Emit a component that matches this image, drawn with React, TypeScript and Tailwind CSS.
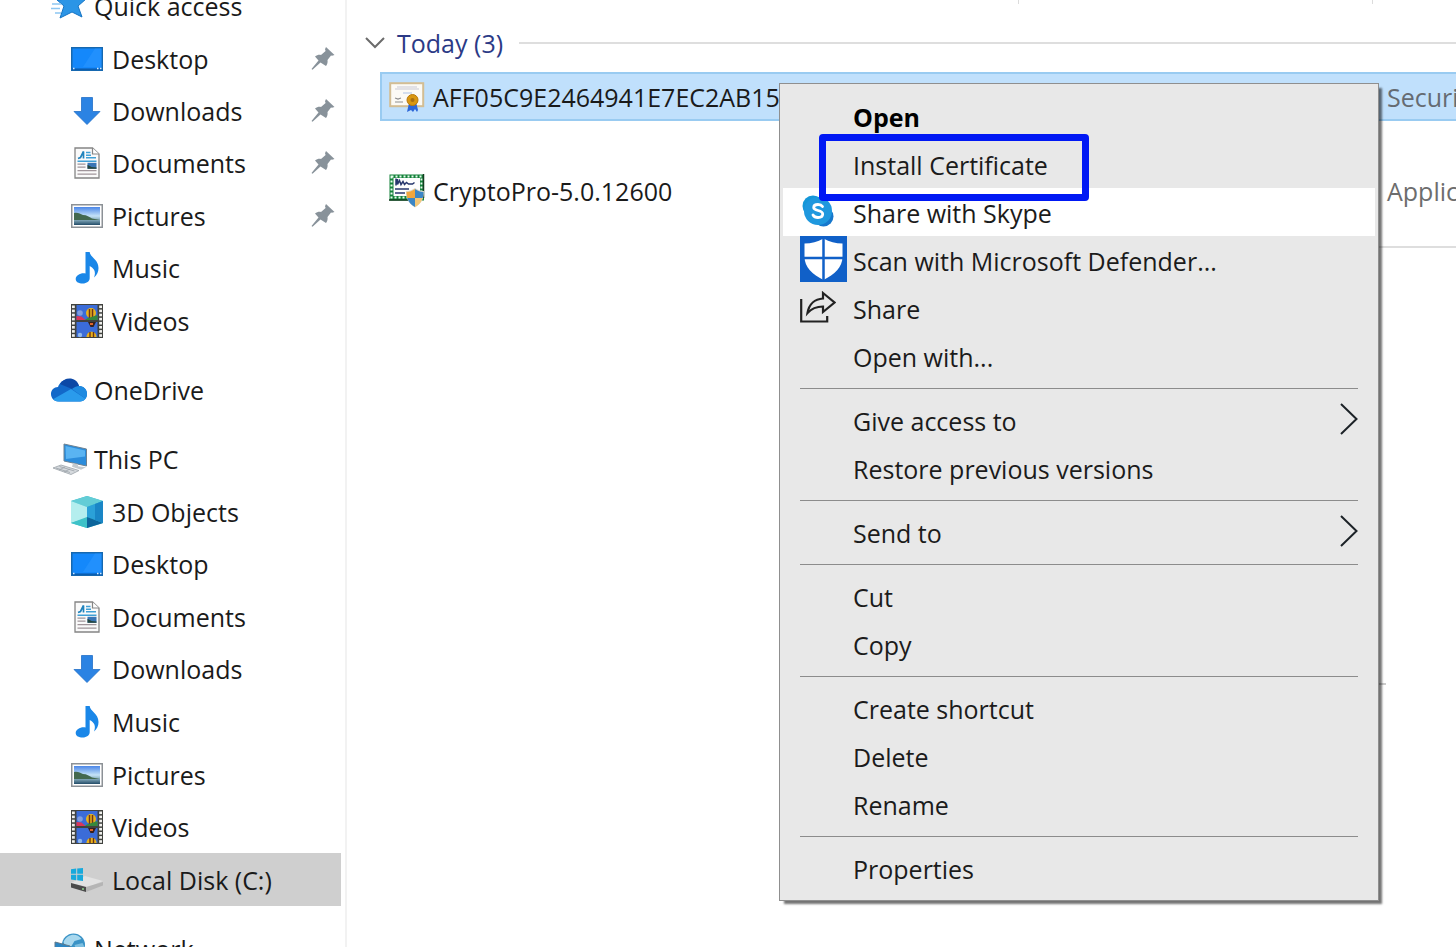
import type { ReactNode } from 'react';

function StarIcon() {
  return (
    <svg className="h-8 w-9" viewBox="0 0 36 32" aria-hidden="true">
      <path d="M20 0l4 9h11l-8 7 4 11-10-5-12 6 4-12-7-6 11-1z" fill="#2b95e6" stroke="#1674c4" strokeWidth="1" />
      <path d="M1 14h9M0 18.500h9M4 23h6" stroke="#8cc6f2" strokeWidth="1.500" />
    </svg>
  );
}

function DesktopIcon() {
  return (
    <svg className="h-6 w-8" viewBox="0 0 32 24" aria-hidden="true">
      <rect x=".75" y=".75" width="30.5" height="22.5" fill="#1488fb" stroke="#1668b0" strokeWidth="1.5" />
      <path d="M12 20L24 1.5h6.5V20z" fill="#2a96ff" opacity=".6" />
      <path d="M1 22.2h30" stroke="#0b5cad" strokeWidth="1.5" />
      <path d="M2 21.5h1.5M26 21.500h1.500M29 21.500h1.500" stroke="#d5ebff" strokeWidth="1.500" />
    </svg>
  );
}

function DownloadsIcon() {
  return (
    <svg className="h-7 w-7" viewBox="0 0 28 28" aria-hidden="true">
      <path d="M8.500.5h11v14h7.500L14 27.500 1 14.500h7.500z" fill="#2b83e3" stroke="#2270c8" strokeWidth=".8" />
    </svg>
  );
}

function DocumentsIcon() {
  return (
    <svg className="h-8 w-[26px]" viewBox="0 0 26 32" aria-hidden="true">
      <path d="M1 1h17.500l6.500 6v24H1z" fill="#fafafa" stroke="#858585" strokeWidth="1.300" />
      <path d="M18.500 1v6H25" fill="#fff" stroke="#858585" strokeWidth="1.200" />
      <path d="M4 11.500l2.500-1 3-6v7" fill="none" stroke="#2083bd" strokeWidth="1.700" />
      <path d="M12 5.500h4.500M12 8.200h5M12 10.800h10M3.500 14.200h19" stroke="#3fa0d6" strokeWidth="1.400" />
      <path d="M3.500 17.200h8M3.500 20.200h8M3.500 23.700h19M3.500 27.200h19" stroke="#a0959a" strokeWidth="1.200" />
      <rect x="13.500" y="15.800" width="9" height="6" fill="#3975b5" />
      <path d="M13.500 21.800v-4l4 2.200 5 .5v1.300z" fill="#26463d" />
    </svg>
  );
}

function PicturesIcon() {
  return (
    <svg className="h-6 w-8" viewBox="0 0 32 24" aria-hidden="true">
      <defs>
        <linearGradient id="sky" x1="0" y1="0" x2="0" y2="1">
          <stop offset="0" stopColor="#4a86e8" />
          <stop offset=".5" stopColor="#c5e3f8" />
          <stop offset=".68" stopColor="#8fb4c4" />
          <stop offset="1" stopColor="#234c68" />
        </linearGradient>
      </defs>
      <rect x=".75" y=".75" width="30.500" height="22.500" fill="#fff" stroke="#8c9196" strokeWidth="1.500" />
      <rect x="3" y="3" width="26" height="18" fill="url(#sky)" />
      <path d="M3 9c4-1 6 1 9 2 4 0 6 2 9 3.500l8 1.500H3z" fill="#43694f" />
    </svg>
  );
}

function MusicIcon() {
  return (
    <svg className="h-8 w-6" viewBox="0 0 24 32" aria-hidden="true">
      <path
        d="M10.500 0h4.200c.2 5 8.800 7.500 8.800 16 0 4-1.500 7-4.500 9.500 2-5 .8-9-4.300-11.500v12c0 3.200-3 5.500-7 5.500-4 0-7-1.500-7-4.500 0-3.200 4-5.700 7.800-5.700.8 0 1.500.1 2 .3z"
        fill="#1a87e8"
      />
    </svg>
  );
}

const holes = [0, 1, 2, 3, 4, 5, 6, 7];

function VideosIcon() {
  return (
    <svg className="h-[34px] w-8" viewBox="0 0 32 34" aria-hidden="true">
      <rect width="32" height="34" fill="#40423f" />
      {holes.map((n) => (
        <g key={n} fill="#f1f1ee">
          <rect x="1" y={1.5 + n * 4.1} width="2.800" height="2.600" />
          <rect x="28.200" y={1.5 + n * 4.1} width="2.800" height="2.600" />
        </g>
      ))}
      <rect x="5.500" y="1" width="21" height="15" fill="#3b6cd8" />
      <rect x="5.500" y="18" width="21" height="15" fill="#3b6cd8" />
      <ellipse cx="20" cy="9" rx="5" ry="5" fill="#e8b21c" />
      <path d="M18.500 5v9M21.500 5v9" stroke="#6d3418" strokeWidth="1.500" />
      <circle cx="9" cy="9" r="2.800" fill="#7f9de0" />
      <path d="M5.500 12l5 .5 4 3.500h-9z" fill="#dc3558" />
      <path d="M16 14.500l10.500-3.500v5H14z" fill="#36883c" />
      <path d="M17 18h8l-2.500 5h-3z" fill="#37201c" />
      <path d="M19 19h3v2h-3z" fill="#e0662b" />
      <path d="M15.500 33c0-7 10-7 10 0z" fill="#e8b21c" />
      <path d="M19 28v5M22.500 28v5" stroke="#6d3418" strokeWidth="1.400" />
      <circle cx="9" cy="31" r="2.200" fill="#91b9ec" />
    </svg>
  );
}

function OneDriveIcon() {
  return (
    <svg className="h-6 w-9" viewBox="0 0 36 24" aria-hidden="true">
      <path d="M7 9C10 0 24-3 28 8c5 0 8 4 8 8s-3 7.500-7 7.500H8C3 23.500 0 20 0 16c0-4 3-7 7-7z" fill="#1268c9" />
      <path d="M9 6C13-1 25-2 28 8l-7 3z" fill="#0c48a6" />
      <path d="M21 11c3-3 7-3.500 9-2.800 4 1 6 4 6 7.800 0 2-.6 3.500-1.500 4.700z" fill="#1f8ae0" />
      <path d="M2 21.200L20 11l14.500 9.700c-1.300 1.800-3.300 2.800-5.500 2.800H8c-2.500 0-4.500-.9-6-2.300z" fill="#2a9bec" />
    </svg>
  );
}

function ThisPcIcon() {
  return (
    <svg className="h-8 w-9" viewBox="0 0 36 32" aria-hidden="true">
      <path d="M13 1l22.500 5v17L13 18z" fill="#2b8cdb" stroke="#6d8190" strokeWidth="1" />
      <path d="M14.500 3l19.500 4.400v6L15 16z" fill="#5ab4f2" />
      <path d="M22 20l5 1.200v2l8 1-5 2.500-9-3z" fill="#c3cacf" />
      <path d="M2 25l8-3 18 5.500-8 4z" fill="#d6dade" stroke="#9aa2a8" strokeWidth=".8" />
      <path d="M5 25l14 4.500M8.500 23.500l15 4.500M8 27l6-3M13 29l6-3" stroke="#9aa2a8" strokeWidth=".8" />
    </svg>
  );
}

function CubeIcon() {
  return (
    <svg className="h-8 w-8" viewBox="0 0 32 32" aria-hidden="true">
      <path d="M16 0l16 5v22l-16 5-16-5V5z" fill="#37bccb" />
      <path d="M0 5l16-5 16 5-16 6z" fill="#63cdd6" />
      <path d="M0 5l16 6v11L0 27z" fill="#b4eeee" />
      <path d="M16 11l16-6v22l-16-6z" fill="#2ba1d8" />
      <path d="M0 27l16-6v11z" fill="#3ec2c8" />
      <path d="M16 21l16 6-16 5z" fill="#0d659c" />
      <path d="M24 8l8-3v22l-8-3z" fill="#1a86c6" />
    </svg>
  );
}

function DiskIcon() {
  return (
    <svg className="h-6 w-8" viewBox="0 0 32 24" aria-hidden="true">
      <path d="M0 15l14-7 18 5-15 6z" fill="#e2e2e2" />
      <path d="M0 15l15 4v5L0 19.500z" fill="#4b4b4b" />
      <path d="M15 19l17-5v3.500L15 24z" fill="#b5b5b5" />
      <circle cx="12" cy="21" r="1" fill="#8ed48d" />
      <path d="M0 1.300l5.200-.7v5.200H0zM6.200.5L12 0v5.800H6.200zM0 6.800h5.200v5.400L0 11.600zM6.200 6.800H12V13l-5.800-.7z" fill="#17a9dc" />
    </svg>
  );
}

function NetworkIcon() {
  return (
    <svg className="h-8 w-9" viewBox="0 0 36 32" aria-hidden="true">
      <circle cx="22.500" cy="12" r="11.500" fill="#3a93c6" />
      <path d="M12.500 9c4-9 14-9 18-3l-7 2-3 5-6 1z" fill="#a9d8ee" />
      <path d="M23.500 12l8-2 2 4-7 6z" fill="#7dbfe0" />
      <path d="M4 9l15 4v13L4 22z" fill="#2c86c4" stroke="#60798a" />
    </svg>
  );
}

function PinIcon() {
  return (
    <svg className="h-6 w-6" viewBox="0 0 24 24" aria-hidden="true">
      <path d="M15 0l8.500 8-2.500.8-1-.4-3.500 4.600c.4 2.500-.2 4.300-1.500 6L9.500 15.500 1.500 22.800.500 22l7-8.500L4 9.500c2-1.500 4-2 6-1.500L14.600 4l-.6-1.800z" fill="#88929a" />
    </svg>
  );
}

type NavItem = { label: string; icon: ReactNode; pinned?: boolean; selected?: boolean; root?: boolean };

const quickAccess: NavItem[] = [
  { label: 'Quick access', icon: <StarIcon />, root: true },
  { label: 'Desktop', icon: <DesktopIcon />, pinned: true },
  { label: 'Downloads', icon: <DownloadsIcon />, pinned: true },
  { label: 'Documents', icon: <DocumentsIcon />, pinned: true },
  { label: 'Pictures', icon: <PicturesIcon />, pinned: true },
  { label: 'Music', icon: <MusicIcon /> },
  { label: 'Videos', icon: <VideosIcon /> },
];

const thisPc: NavItem[] = [
  { label: 'This PC', icon: <ThisPcIcon />, root: true },
  { label: '3D Objects', icon: <CubeIcon /> },
  { label: 'Desktop', icon: <DesktopIcon /> },
  { label: 'Documents', icon: <DocumentsIcon /> },
  { label: 'Downloads', icon: <DownloadsIcon /> },
  { label: 'Music', icon: <MusicIcon /> },
  { label: 'Pictures', icon: <PicturesIcon /> },
  { label: 'Videos', icon: <VideosIcon /> },
  { label: 'Local Disk (C:)', icon: <DiskIcon />, selected: true },
];

function NavRow({ item }: { item: NavItem }) {
  return (
    <li className={item.selected ? 'bg-[#cfcfcf]' : ''}>
      <a href="#" className={`flex h-full items-center pr-1.5 ${item.root ? 'pl-[51px]' : 'pl-[69px]'}`}>
        <span className="flex w-9 shrink-0 justify-center">{item.icon}</span>
        <span className="flex-1 pl-[7px] whitespace-nowrap">{item.label}</span>
        {item.pinned && <PinIcon />}
      </a>
    </li>
  );
}

function Sidebar() {
  return (
    <nav className="flex w-[347px] shrink-0 flex-col border-r-2 border-[#f2f2f2] pr-1">
      <div className="-mt-5 flex flex-col gap-[17px]">
        <ul className="grid h-[367px] grid-rows-7">
          {quickAccess.map((item) => <NavRow key={item.label} item={item} />)}
        </ul>
        <ul className="grid h-[52px]">
          <NavRow item={{ label: 'OneDrive', icon: <OneDriveIcon />, root: true }} />
        </ul>
        <ul className="grid h-[473px] grid-rows-9">
          {thisPc.map((item) => <NavRow key={item.label} item={item} />)}
        </ul>
        <ul className="grid h-[52px]">
          <NavRow item={{ label: 'Network', icon: <NetworkIcon />, root: true }} />
        </ul>
      </div>
    </nav>
  );
}

function CertificateIcon() {
  return (
    <svg className="h-8 w-9 shrink-0" viewBox="0 0 36 32" aria-hidden="true">
      <rect x="1.200" y="2.200" width="33" height="23" fill="#fcfaf5" stroke="#d3bd93" strokeWidth="2" />
      <path d="M8 6h20M6 8h24" stroke="#c9c9d4" strokeWidth="1" />
      <path d="M14 12h9" stroke="#b9cbea" strokeWidth="1.200" />
      <path d="M6 17l3 1 3-1M6 21h8" fill="none" stroke="#8e8e8e" strokeWidth="1.200" />
      <path d="M20 22l-2 9 4-2 2 2 2-3 2 3 1-2-2-8z" fill="#2c66d8" />
      <circle cx="23.500" cy="19" r="5.500" fill="#d99711" stroke="#b9790a" />
      <circle cx="23.500" cy="19" r="2" fill="#a96f10" />
    </svg>
  );
}

function InstallerIcon() {
  return (
    <svg className="h-[34px] w-9 shrink-0" viewBox="0 0 36 34" aria-hidden="true">
      <path d="M.5.5H35v26H.5z" fill="#14813a" />
      <rect x="2.500" y="2.500" width="30" height="21" fill="none" stroke="#e9fff0" strokeWidth="2" strokeDasharray="2 2" />
      <rect x="4.500" y="4" width="26.500" height="18" fill="#fdfdfd" />
      <path d="M0 26h20M34.500 0v24" stroke="#153c20" strokeWidth="1.500" />
      <path d="M7 4.500v7M8.500 5v5.500l2-4 1.500 4 2-3 1.500 3 2-2 2 1.500h4l2-1.500" fill="none" stroke="#26366c" strokeWidth="1.500" />
      <path d="M6 15h14M6 19h10" stroke="#26366c" strokeWidth="1.500" />
      <path d="M26 14c3 2 5 3 9 3 0 8-3 13-9 16.500-6-3.500-9-8.500-9-16.500 4 0 6-1 9-3z" fill="#ddd9c8" />
      <path d="M26 15c-3 2-5 3-8.500 3 0 2 .2 4 .7 6H26z" fill="#f0a63e" />
      <path d="M26 15c3 2 5 3 8.500 3 0 2-.2 4-.8 6H26z" fill="#3c86c5" />
      <path d="M18.200 24H26v9c-4-2-6.500-5-7.800-9z" fill="#3c86c5" />
      <path d="M26 24h7.700c-1.200 4-3.700 7-7.700 9z" fill="#f3c778" />
    </svg>
  );
}

function FileList() {
  return (
    <main className="min-w-0 flex-1 overflow-hidden">
      <div className="flex h-7 items-start pl-[671px]">
        <span className="h-1 w-px bg-[#dcdcdc]" />
        <span className="ml-[353px] h-1 w-px bg-[#dcdcdc]" />
      </div>
      <button type="button" className="flex h-[30px] w-full items-center pl-[18px] text-[#2b3a86]">
        <svg className="h-3 w-5" viewBox="0 0 20 12" aria-hidden="true">
          <path d="M1 1l9 9 9-9" fill="none" stroke="#6b6b6b" strokeWidth="2" />
        </svg>
        <span className="pl-3 whitespace-nowrap">Today (3)</span>
        <span className="ml-4 h-0.5 flex-1 bg-[#dedede]" />
      </button>
      <table className="mt-[14px] ml-[33px] w-full table-fixed border-separate border-spacing-0 text-left">
        <tbody>
          <tr>
            <td className="h-[49px] w-[1007px] border-y-2 border-l-2 border-[#99cbf1] bg-[#c0e0fc] p-0 pl-[7px]">
              <div className="flex items-center gap-2">
                <CertificateIcon />
                <span className="whitespace-nowrap">AFF05C9E2464941E7EC2AB15</span>
              </div>
            </td>
            <td className="border-y-2 border-[#99cbf1] bg-[#c0e0fc] p-0 whitespace-nowrap text-[#656b72]">Security Certificate</td>
          </tr>
          <tr>
            <td className="p-0 pt-[46px] pl-[9px]">
              <div className="flex h-12 items-center gap-2">
                <InstallerIcon />
                <span className="whitespace-nowrap">CryptoPro-5.0.12600</span>
              </div>
            </td>
            <td className="p-0 pt-[46px] whitespace-nowrap text-[#6d6d6d]">Application</td>
          </tr>
        </tbody>
      </table>
      <div className="mt-[31px] ml-[700px] h-0.5 bg-[#dedede]" />
      <div className="mt-[435px] ml-[700px] h-0.5 w-[339px] bg-[#cccccc]" />
    </main>
  );
}

function SkypeIcon() {
  return (
    <svg className="h-8 w-8" viewBox="0 0 32 32" aria-hidden="true">
      <circle cx="11" cy="11" r="10.500" fill="#1597d8" />
      <circle cx="21.500" cy="21.500" r="10" fill="#1677cc" />
      <circle cx="16" cy="16" r="14" fill="#1f98de" />
      <path
        d="M20.500 11.500c-1-1.500-2.500-2-4.500-2-2.500 0-4.300 1.100-4.300 3 0 4 9 2 9 6.500 0 2.200-2 3.500-4.700 3.500-2.300 0-4-.8-5-2.500"
        fill="none"
        stroke="#fff"
        strokeWidth="2.800"
        strokeLinecap="round"
      />
    </svg>
  );
}

function DefenderIcon() {
  return (
    <svg className="h-[46px] w-[47px]" viewBox="0 0 47 46" aria-hidden="true">
      <rect width="47" height="46" fill="#1060c8" />
      <path d="M23.500 2.500c6 3.500 12 5 19 5v13c0 11-8 18-19 23.500-11-5.500-19-12.500-19-23.500v-13c7 0 13-1.500 19-5z" fill="#fff" />
      <path d="M23.500 1v44M3 22h41" stroke="#1060c8" strokeWidth="2.500" />
    </svg>
  );
}

function ShareIcon() {
  return (
    <svg className="h-8 w-9" viewBox="0 0 36 32" fill="none" stroke="#222" strokeWidth="2.200" aria-hidden="true">
      <path d="M1.200 8v22.500h26V25" />
      <path d="M23 2l11.500 9.500L23 21v-5.500c-6 0-11 1.500-15.500 6.500C9 13 15 8 23 7.500z" />
    </svg>
  );
}

type MenuEntry = { label: string; icon?: ReactNode; submenu?: boolean; bold?: boolean; hovered?: boolean; marked?: boolean };

const menuGroups: MenuEntry[][] = [
  [
    { label: 'Open', bold: true },
    { label: 'Install Certificate', marked: true },
    { label: 'Share with Skype', icon: <SkypeIcon />, hovered: true },
    { label: 'Scan with Microsoft Defender...', icon: <DefenderIcon /> },
    { label: 'Share', icon: <ShareIcon /> },
    { label: 'Open with...' },
  ],
  [{ label: 'Give access to', submenu: true }, { label: 'Restore previous versions' }],
  [{ label: 'Send to', submenu: true }],
  [{ label: 'Cut' }, { label: 'Copy' }],
  [{ label: 'Create shortcut' }, { label: 'Delete' }, { label: 'Rename' }],
  [{ label: 'Properties' }],
];

function ContextMenu() {
  return (
    <div
      role="menu"
      className="absolute top-[83px] left-[779px] w-[600px] border border-[#8f8f8f] bg-[#e8e8e8] px-[3px] py-2 text-[#1b1b1b] shadow-[4px_4px_2px_-1px_rgba(0,0,0,0.55)]"
    >
      {menuGroups.map((group, index) => (
        <div key={group[0].label} role="group">
          {index > 0 && (
            <div className="flex h-4 items-center pr-[17px] pl-[17px]">
              <hr className="flex-1 border-[#8c8c8c]" />
            </div>
          )}
          {group.map((entry) => (
            <button
              key={entry.label}
              type="button"
              role="menuitem"
              className={`relative flex h-12 w-full items-center pr-4 pl-[17px] text-left ${entry.hovered ? 'bg-white' : ''} ${entry.bold ? 'font-bold text-black' : ''}`}
            >
              <span className={`flex w-[47px] shrink-0 pb-0.5 ${entry.hovered ? 'pl-0.5' : ''}`}>{entry.icon}</span>
              <span className="flex-1 pt-0.5 pl-[6px] whitespace-nowrap">{entry.label}</span>
              {entry.submenu && (
                <span className="pb-0.5">
                  <svg className="block h-8 w-5" viewBox="0 0 20 32" aria-hidden="true">
                    <path d="M2 1l15.500 15L2 31" fill="none" stroke="#1c2227" strokeWidth="2" />
                  </svg>
                </span>
              )}
              {entry.marked && (
                <span className="absolute -top-1.5 left-9 z-10 h-[67px] w-[270px] rounded-[4px] border-[7px] border-[#0018f4]" />
              )}
            </button>
          ))}
        </div>
      ))}
    </div>
  );
}

export default function App() {
  return (
    <div className="relative flex h-screen overflow-hidden bg-white font-['Open_Sans','Noto_Sans',sans-serif] text-[25px] leading-[30px] text-[#1a1a1a]">
      <Sidebar />
      <FileList />
      <ContextMenu />
    </div>
  );
}
